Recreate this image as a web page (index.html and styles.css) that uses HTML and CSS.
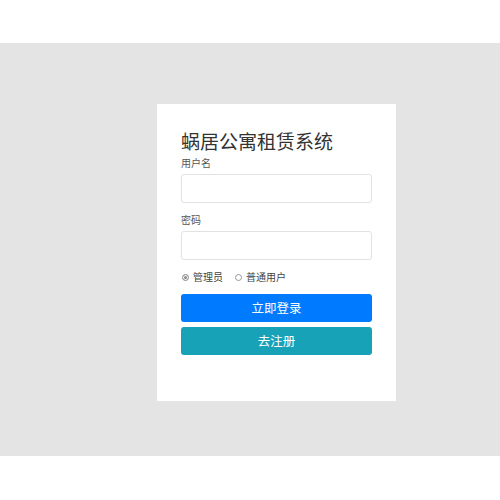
FILE: index.html
```html
<!DOCTYPE html>
<html lang="zh">
<head>
<meta charset="utf-8">
<title>蜗居公寓租赁系统</title>
<link rel="stylesheet" href="styles.css">
</head>
<body>
<div class="top"></div>
<div class="stage">
  <form class="card">
    <h1 class="title">蜗居公寓租赁系统</h1>
    <label class="label" for="u">用户名</label>
    <input class="field" id="u" type="text">
    <label class="label label-gap" for="p">密码</label>
    <input class="field" id="p" type="password">
    <div class="roles">
      <label class="role"><input class="radio" type="radio" name="r" checked><span>管理员</span></label>
      <label class="role"><input class="radio" type="radio" name="r"><span>普通用户</span></label>
    </div>
    <button class="btn btn-primary" type="button">立即登录</button>
    <button class="btn btn-info" type="button">去注册</button>
  </form>
</div>
</body>
</html>
```
FILE: styles.css
```css
html, body {
  margin: 0;
  padding: 0;
  background: #fff;
  font-family: "Noto Sans CJK SC", "Noto Sans", sans-serif;
}
.top {
  height: 43px;
}
.stage {
  background: #e4e4e4;
  height: 413px;
  box-sizing: border-box;
  padding: 61px 0 0 157px;
}
.card {
  width: 239px;
  height: 297px;
  box-sizing: border-box;
  background: #fff;
  padding: 26px 24px 0 24px;
  display: flex;
  flex-direction: column;
}
.title {
  margin: 0;
  font-size: 19px;
  line-height: 22px;
  font-weight: 400;
  color: #333;
}
.label {
  display: block;
  margin-top: 4px;
  font-size: 10px;
  line-height: 14px;
  color: #555;
}
.label-gap {
  margin-top: 10px;
}
.field {
  display: block;
  margin: 4px 0 0 0;
  width: 191px;
  height: 29px;
  box-sizing: border-box;
  border: 1px solid #e2e2e2;
  border-radius: 3px;
  background: #fff;
  padding: 0 8px;
  font-size: 11px;
  outline: none;
}
.roles {
  display: flex;
  gap: 12px;
  margin-top: 10px;
  height: 14px;
  align-items: center;
  padding-left: 1px;
}
.role {
  display: flex;
  align-items: center;
  gap: 4px;
  font-size: 10px;
  line-height: 14px;
  color: #444;
}
.radio {
  appearance: none;
  -webkit-appearance: none;
  margin: 0;
  width: 7px;
  height: 7px;
  border: 1px solid #999;
  border-radius: 50%;
  background: #fff;
  box-sizing: border-box;
}
.radio:checked {
  background: #888;
  box-shadow: inset 0 0 0 1px #fff;
  border-color: #999;
}
.btn {
  display: block;
  width: 191px;
  height: 28px;
  border: 0;
  border-radius: 3px;
  color: #fff;
  font-family: inherit;
  font-size: 12.5px;
  line-height: 28px;
  padding: 0;
}
.btn-primary {
  margin-top: 10px;
  background: #007bff;
}
.btn-info {
  margin-top: 5px;
  background: #17a2b8;
}
```
